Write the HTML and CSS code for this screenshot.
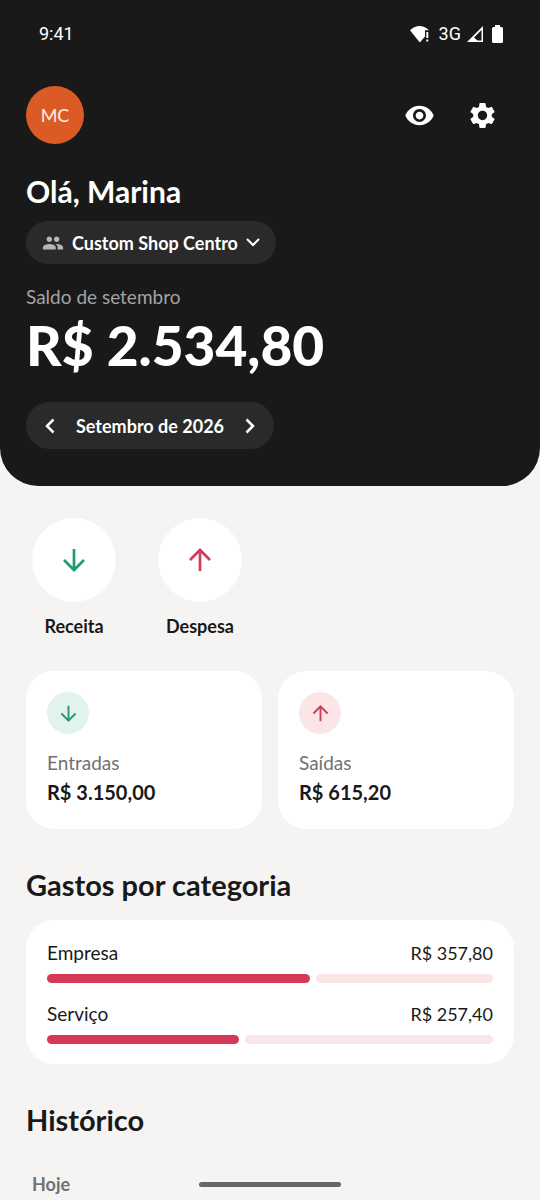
FILE: index.html
```html
<!DOCTYPE html>
<html lang="pt-BR">
<head>
<meta charset="utf-8">
<meta name="viewport" content="width=device-width, initial-scale=1">
<title>Saldo de setembro</title>
<link rel="stylesheet" href="styles.css">
</head>
<body>
<header class="hero">
  <div class="status">
    <span>9:41</span>
    <div class="status-icons">
      <svg width="20" height="18" viewBox="0 0 20 18" fill="currentColor" aria-hidden="true"><path d="M0 5.200Q9.500-3.200 19 5.200H15V11.500L9.800 17.500Z"/><path d="M16.300 7H18.300V13H16.300ZM16.300 14.500H18.300V16.500H16.300Z"/></svg>
      <span class="network">3G</span>
      <svg width="16" height="16" viewBox="0 0 16 16" aria-hidden="true"><path fill="currentColor" fill-rule="evenodd" d="M16 0V16H0ZM14.500 4V14.500H10.500L7 11.500Z"/></svg>
      <svg class="battery" width="11" height="18" viewBox="0 0 11 18" fill="currentColor" aria-hidden="true"><path d="M3 0H8V2H9.500Q11 2 11 3.500V16.500Q11 18 9.500 18H1.500Q0 18 0 16.500V3.500Q0 2 1.500 2H3Z"/></svg>
    </div>
  </div>
  <div class="topbar">
    <div class="avatar">MC</div>
    <div class="tools">
      <button class="tool" type="button" aria-label="Ocultar saldo"><svg width="31" height="31" viewBox="0 0 24 24" fill="currentColor"><path d="M12 4.500C7 4.500 2.730 7.610 1 12c1.730 4.390 6 7.500 11 7.500s9.270-3.110 11-7.500c-1.730-4.390-6-7.500-11-7.500zM12 17c-2.760 0-5-2.240-5-5s2.240-5 5-5 5 2.240 5 5-2.240 5-5 5zm0-8c-1.660 0-3 1.340-3 3s1.340 3 3 3 3-1.340 3-3-1.340-3-3-3z"/></svg></button>
      <button class="tool" type="button" aria-label="Configurações"><svg width="31" height="31" viewBox="0 0 24 24" fill="currentColor"><path d="M19.140 12.940c.04-.3.06-.61.06-.94 0-.32-.02-.64-.07-.94l2.030-1.580c.18-.14.23-.41.12-.61l-1.920-3.320c-.12-.22-.37-.29-.59-.22l-2.390.96c-.5-.38-1.030-.7-1.620-.94l-.36-2.540c-.04-.24-.24-.41-.48-.41h-3.840c-.24 0-.43.17-.47.41l-.36 2.540c-.59.24-1.130.57-1.620.94l-2.390-.96c-.22-.08-.47 0-.59.22L2.740 8.870c-.12.21-.08.47.12.61l2.030 1.580c-.05.3-.09.63-.09.94s.02.64.07.94l-2.030 1.580c-.18.14-.23.41-.12.61l1.920 3.320c.12.22.37.29.59.22l2.390-.96c.5.38 1.030.7 1.620.94l.36 2.540c.05.24.24.41.48.41h3.840c.24 0 .44-.17.47-.41l.36-2.540c.59-.24 1.130-.56 1.620-.94l2.390.96c.22.08.47 0 .59-.22l1.920-3.320c.12-.22.07-.47-.12-.61l-2.010-1.580zM12 15.600c-1.980 0-3.600-1.620-3.600-3.600s1.620-3.600 3.600-3.600 3.600 1.620 3.600 3.600-1.620 3.600-3.600 3.600z"/></svg></button>
    </div>
  </div>
  <h1 class="greeting">Olá, Marina</h1>
  <button class="shop" type="button">
    <svg class="people" width="22" height="22" viewBox="0 0 24 24" fill="currentColor" aria-hidden="true"><path d="M16 11c1.660 0 2.990-1.340 2.990-3S17.660 5 16 5s-3 1.340-3 3 1.340 3 3 3zm-8 0c1.660 0 2.990-1.340 2.990-3S9.660 5 8 5 5 6.340 5 8s1.340 3 3 3zm0 2c-2.330 0-7 1.170-7 3.500V19h14v-2.500C15 14.170 10.330 13 8 13zm8 0c-.29 0-.62.02-.97.05 1.160.84 1.970 1.970 1.970 3.450V19h6v-2.500c0-2.330-4.670-3.500-7-3.500z"/></svg>
    <span>Custom Shop Centro</span>
    <svg width="14" height="10" viewBox="0 0 14 10" fill="none" stroke="currentColor" stroke-width="2" aria-hidden="true"><path d="M1 1L7 7L13 1"/></svg>
  </button>
  <p class="caption">Saldo de setembro</p>
  <p class="balance">R$ 2.534,80</p>
  <div class="month">
    <button class="step" type="button" aria-label="Mês anterior"><svg width="10" height="16" viewBox="0 0 10 16" fill="none" stroke="currentColor" stroke-width="2.500"><path d="M8.500 1.500L2 8L8.500 14.500"/></svg></button>
    <span class="month-name">Setembro de 2026</span>
    <button class="step" type="button" aria-label="Próximo mês"><svg width="10" height="16" viewBox="0 0 10 16" fill="none" stroke="currentColor" stroke-width="2.500"><path d="M1.500 1.500L8 8L1.500 14.500"/></svg></button>
  </div>
</header>
<main class="content">
  <div class="actions">
    <button class="action" type="button">
      <span class="disc income"><svg width="24" height="24" viewBox="0 0 24 24" class="arrow"><path d="M12 1V22M2 12L12 22L22 12"/></svg></span>
      <span>Receita</span>
    </button>
    <button class="action" type="button">
      <span class="disc expense"><svg width="24" height="24" viewBox="0 0 24 24" class="arrow"><path d="M12 23V2M2 12L12 2L22 12"/></svg></span>
      <span>Despesa</span>
    </button>
  </div>
  <div class="totals">
    <section class="card total">
      <span class="badge income"><svg width="17" height="17" viewBox="0 0 24 24" class="arrow"><path d="M12 1V22M2 12L12 22L22 12"/></svg></span>
      <p class="total-label">Entradas</p>
      <p class="total-value">R$ 3.150,00</p>
    </section>
    <section class="card total">
      <span class="badge expense"><svg width="17" height="17" viewBox="0 0 24 24" class="arrow"><path d="M12 23V2M2 12L12 2L22 12"/></svg></span>
      <p class="total-label">Saídas</p>
      <p class="total-value">R$ 615,20</p>
    </section>
  </div>
  <h2 class="heading">Gastos por categoria</h2>
  <section class="card categories">
    <div>
      <div class="category"><span class="name">Empresa</span><span>R$ 357,80</span></div>
      <div class="bar"><div class="fill" style="width:59%"></div><div class="rest"></div></div>
    </div>
    <div>
      <div class="category"><span class="name">Serviço</span><span>R$ 257,40</span></div>
      <div class="bar"><div class="fill" style="width:43%"></div><div class="rest"></div></div>
    </div>
  </section>
  <h2 class="heading">Histórico</h2>
  <h3 class="day">Hoje</h3>
</main>
<div class="home-handle"></div>
</body>
</html>
```
FILE: styles.css
```css
* { box-sizing: border-box; }
body, h1, h2, h3, p { margin: 0; }
body {
  min-height: 100vh;
  background: #f5f4f3;
  color: #191919;
  font-family: Lato, "Open Sans", sans-serif;
  font-size: 18px;
  line-height: 24px;
}
button {
  border: 0;
  padding: 0;
  background: none;
  color: inherit;
  font: inherit;
  cursor: pointer;
}
svg { display: block; flex: none; }

.hero {
  display: flex;
  flex-direction: column;
  align-items: flex-start;
  padding: 0 26px 37px;
  border-radius: 0 0 38px 38px;
  background: #191919;
  color: #fff;
}
.status {
  display: flex;
  align-self: stretch;
  align-items: center;
  justify-content: space-between;
  height: 68px;
  padding: 0 11px 0 13px;
  font-family: Roboto, sans-serif;
  font-size: 18px;
}
.status-icons { display: flex; align-items: center; gap: 6px; }
.network { margin-left: 3px; }
.battery { margin-left: 3px; }
.topbar {
  display: flex;
  align-self: stretch;
  align-items: center;
  justify-content: space-between;
  margin-top: 18px;
}
.avatar {
  display: grid;
  place-items: center;
  width: 58px;
  height: 58px;
  border-radius: 50%;
  background: #dc5a26;
  color: #fdeee6;
}
.tools { display: flex; }
.tool { display: grid; place-items: center; width: 63px; height: 58px; }
.greeting { margin-top: 29px; font-size: 30px; line-height: 36px; font-weight: 700; }
.shop {
  display: flex;
  align-items: center;
  gap: 8px;
  height: 43px;
  margin-top: 12px;
  padding: 0 16px;
  border-radius: 22px;
  background: #2a2a2a;
  font-weight: 700;
}
.people { color: #b5b5b5; }
.caption { margin-top: 21px; color: #a3a3a3; font-size: 19px; }
.balance { font-size: 55px; line-height: 72px; font-weight: 900; }
.month {
  display: flex;
  align-items: center;
  height: 47px;
  margin-top: 21px;
  border-radius: 24px;
  background: #2a2a2a;
  font-weight: 700;
}
.month-name { padding: 0 2px; }
.step { display: grid; place-items: center; width: 48px; height: 47px; }

.content { padding: 32px 26px 0; }
.actions { display: flex; gap: 30px; }
.action {
  display: flex;
  flex-direction: column;
  align-items: center;
  gap: 12px;
  width: 96px;
  font-weight: 700;
}
.disc, .badge { display: grid; place-items: center; border-radius: 50%; }
.disc { width: 84px; height: 84px; background: #fff; }
.badge { width: 42px; height: 42px; }
.arrow { fill: none; stroke: currentColor; stroke-width: 2.700; }
.income { color: #239b70; }
.expense { color: #d23c5b; }
.badge.income { background: #e1f3eb; }
.badge.expense { background: #fbe5e7; }
.totals {
  display: grid;
  grid-template-columns: 1fr 1fr;
  gap: 16px;
  margin-top: 33px;
}
.card { border-radius: 28px; background: #fff; }
.total { padding: 21px 21px 25px; }
.total-label { margin-top: 17px; color: #717171; font-size: 19px; }
.total-value { margin-top: 5px; font-size: 20px; font-weight: 700; }
.heading { margin-top: 38px; font-size: 29px; line-height: 36px; font-weight: 700; }
.categories {
  display: grid;
  gap: 19px;
  margin-top: 17px;
  padding: 21px 21px 20px;
}
.category { display: flex; justify-content: space-between; }
.name { font-size: 19px; }
.bar { display: flex; gap: 6px; margin-top: 9px; }
.fill, .rest { height: 9px; border-radius: 5px; }
.fill { background: #d43a57; }
.rest { flex: 1; background: #fae5e7; }
.day { margin: 34px 0 0 6px; color: #717171; font-size: 18px; font-weight: 700; }
.home-handle {
  position: fixed;
  bottom: 13px;
  left: 50%;
  width: 142px;
  height: 5px;
  margin-left: -71px;
  border-radius: 3px;
  background: #666;
}
```
